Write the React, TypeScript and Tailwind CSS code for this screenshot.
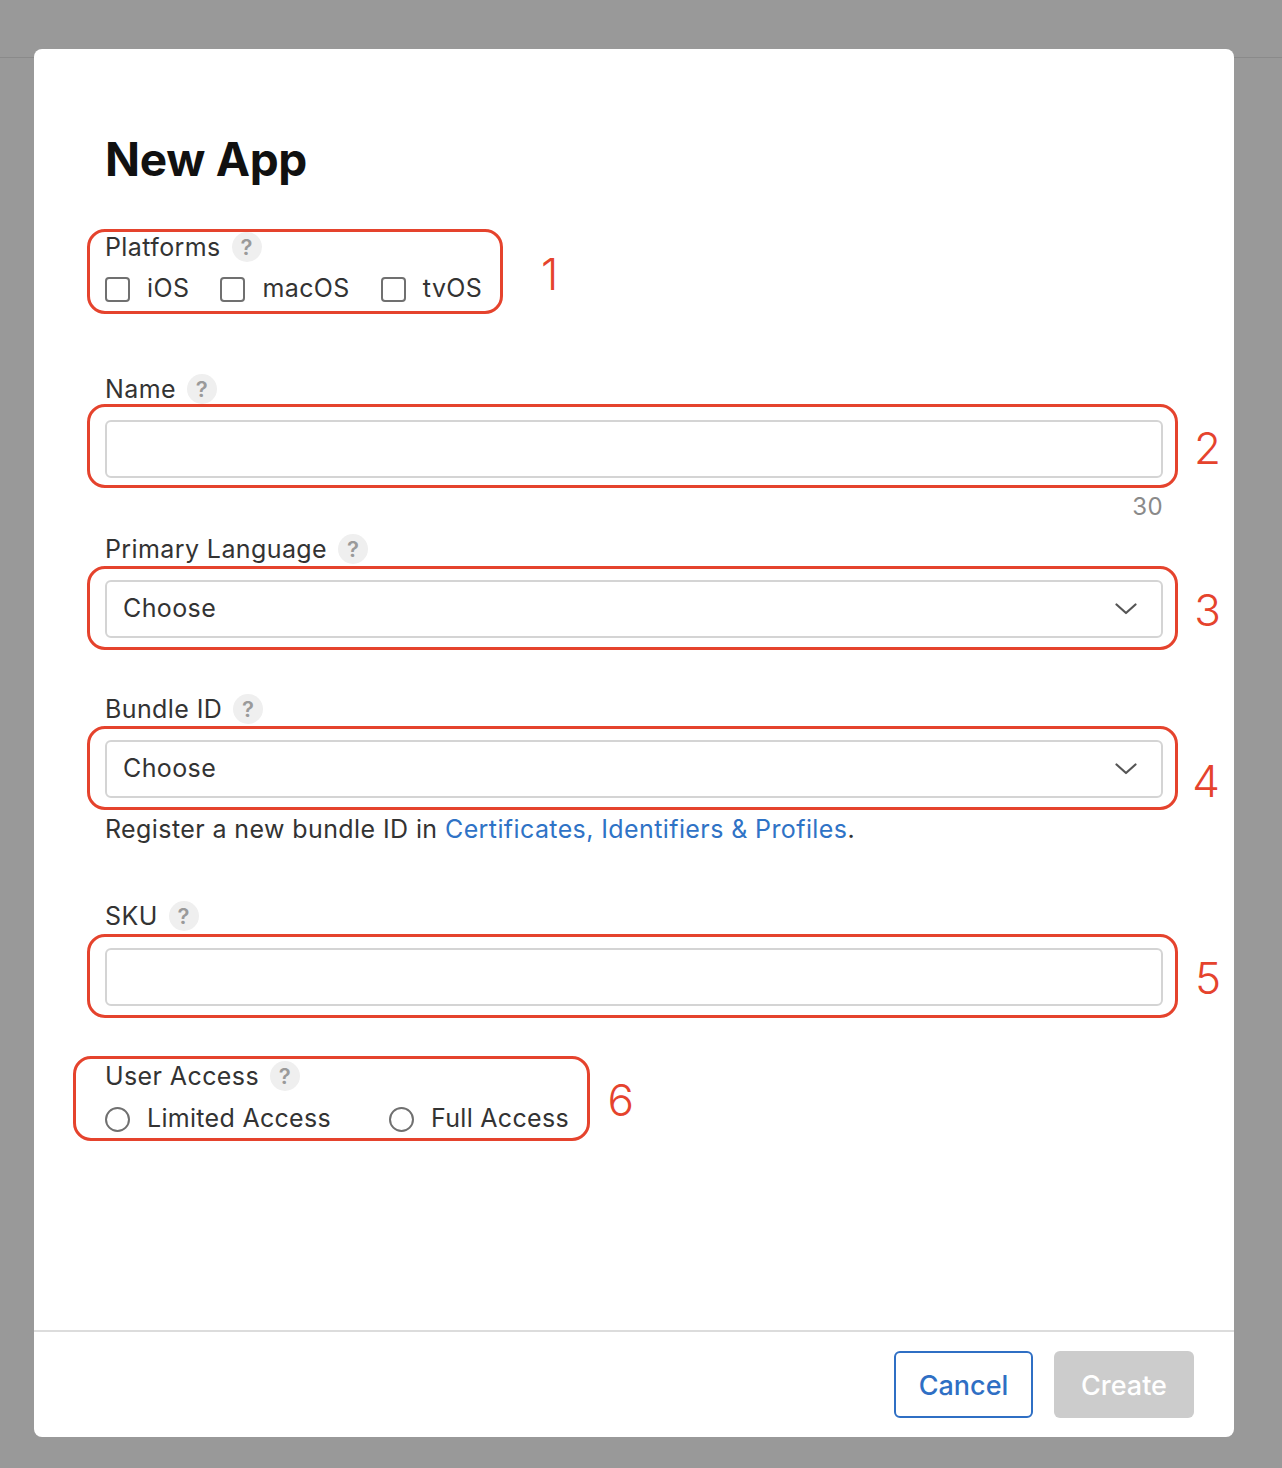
import React from "react";

const RED = "border-[#e5432d]";

function Help() {
  return (
    <span className="ml-[11px] inline-flex h-[30px] w-[30px] items-center justify-center rounded-full bg-[#efefef] text-[22px] font-semibold leading-none text-[#9a9a9a]">
      ?
    </span>
  );
}

function Label({ children }: { children: React.ReactNode }) {
  return (
    <div className="flex h-[32px] items-center text-[25px] leading-[32px] tracking-[0.4px] text-[#333]">
      <span>{children}</span>
      <Help />
    </div>
  );
}

function Num({ n, className }: { n: string; className: string }) {
  return (
    <span className={`pointer-events-none absolute text-[44px] font-light leading-none text-[#e5432d] ${className}`}>
      {n}
    </span>
  );
}

function Chevron() {
  return (
    <svg width="22" height="12" viewBox="0 0 22 12" fill="none">
      <path d="M1.5 1.5 L11 10 L20.5 1.5" stroke="#555" strokeWidth="2.2" strokeLinecap="round" strokeLinejoin="round" />
    </svg>
  );
}

function Select() {
  return (
    <div className="flex h-[58px] items-center justify-between rounded-[6px] border-2 border-[#d4d4d4] pl-[16px] pr-[24px] text-[25px] tracking-[0.4px] text-[#333]">
      <span>Choose</span>
      <Chevron />
    </div>
  );
}

function Input() {
  return <div className="h-[58px] rounded-[6px] border-2 border-[#d4d4d4]" />;
}

function Check({ label, className = "" }: { label: string; className?: string }) {
  return (
    <div className={`flex items-center ${className}`}>
      <span className="h-[25px] w-[25px] rounded-[4px] border-2 border-[#707070]" />
      <span className="ml-[17px] text-[25px] tracking-[0.4px] text-[#333]">{label}</span>
    </div>
  );
}

function Radio({ label, className = "" }: { label: string; className?: string }) {
  return (
    <div className={`flex items-center ${className}`}>
      <span className="h-[25px] w-[25px] rounded-full border-2 border-[#707070]" />
      <span className="ml-[17px] text-[25px] tracking-[0.3px] text-[#333]">{label}</span>
    </div>
  );
}

export default function App() {
  return (
    <div
      className="relative h-[1468px] w-[1282px] overflow-hidden bg-[#999999]"
      style={{ fontFamily: "Inter, 'Noto Sans', sans-serif" }}
    >
      <div className="h-[58px] border-b border-[#8a8a8a]" />

      {/* dialog */}
      <div className="absolute left-[34px] top-[49px] flex h-[1388px] w-[1200px] flex-col rounded-[8px] bg-white">
        <div className="flex flex-1 flex-col px-[71px] pt-[82px]">
          <h1 className="h-[56px] text-[46px] font-bold leading-[56px] tracking-[-0.3px] text-[#111]">New App</h1>

          {/* 1 platforms */}
          <div className="relative mt-[44px] self-start">
            <div className={`pointer-events-none absolute -bottom-[9px] -left-[18px] -right-[21px] -top-[2px] rounded-[18px] border-[3px] ${RED}`} />
            <Num n="1" className="-right-[76px] top-[21px]" />
            <Label>Platforms</Label>
            <div className="mt-[10px] flex h-[32px] items-center">
              <Check label="iOS" className="mr-[31px]" />
              <Check label="macOS" className="mr-[31px]" />
              <Check label="tvOS" />
            </div>
          </div>

          {/* 2 name */}
          <div className="mt-[68px]">
            <Label>Name</Label>
          </div>
          <div className="relative mt-[15px]">
            <div className={`pointer-events-none absolute -bottom-[10px] -left-[18px] -right-[15px] -top-[16px] rounded-[18px] border-[3px] ${RED}`} />
            <Num n="2" className="-right-[58px] top-[6px]" />
            <Input />
          </div>
          <div className="mt-[13px] h-[32px] text-right text-[24px] leading-[32px] tracking-[0.4px] text-[#8a8a8a]">30</div>

          {/* 3 language */}
          <div className="mt-[10px]">
            <Label>Primary Language</Label>
          </div>
          <div className="relative mt-[15px]">
            <div className={`pointer-events-none absolute -bottom-[12px] -left-[18px] -right-[15px] -top-[14px] rounded-[18px] border-[3px] ${RED}`} />
            <Num n="3" className="-right-[58px] top-[8px]" />
            <Select />
          </div>

          {/* 4 bundle */}
          <div className="mt-[55px]">
            <Label>Bundle ID</Label>
          </div>
          <div className="relative mt-[15px]">
            <div className={`pointer-events-none absolute -bottom-[12px] -left-[18px] -right-[15px] -top-[14px] rounded-[18px] border-[3px] ${RED}`} />
            <Num n="4" className="-right-[57px] top-[19px]" />
            <Select />
          </div>
          <p className="mt-[15px] h-[32px] text-[25px] leading-[32px] tracking-[0.4px] text-[#333]">
            Register a new bundle ID in <span className="text-[#2f73c6]">Certificates, Identifiers &amp; Profiles</span>.
          </p>

          {/* 5 sku */}
          <div className="mt-[55px]">
            <Label>SKU</Label>
          </div>
          <div className="relative mt-[16px]">
            <div className={`pointer-events-none absolute -bottom-[12px] -left-[18px] -right-[15px] -top-[14px] rounded-[18px] border-[3px] ${RED}`} />
            <Num n="5" className="-right-[58px] top-[8px]" />
            <Input />
          </div>

          {/* 6 access */}
          <div className="relative mt-[54px] self-start">
            <div className={`pointer-events-none absolute -bottom-[6px] -left-[32px] -right-[21px] -top-[4px] rounded-[18px] border-[3px] ${RED}`} />
            <Num n="6" className="-right-[65px] top-[18px]" />
            <Label>User Access</Label>
            <div className="mt-[11px] flex h-[32px] items-center">
              <Radio label="Limited Access" className="mr-[58px]" />
              <Radio label="Full Access" />
            </div>
          </div>
        </div>

        {/* footer */}
        <div className="flex h-[107px] items-center justify-end gap-[21px] border-t-2 border-[#dcdcdc] pr-[40px]">
          <button className="h-[67px] w-[139px] rounded-[6px] border-2 border-[#2f6fc4] pt-[3px] text-[27px] font-medium text-[#2f6fc4]">
            Cancel
          </button>
          <button className="h-[67px] w-[140px] rounded-[6px] bg-[#cccccc] pt-[3px] text-[27px] font-medium text-white">
            Create
          </button>
        </div>
      </div>
    </div>
  );
}
